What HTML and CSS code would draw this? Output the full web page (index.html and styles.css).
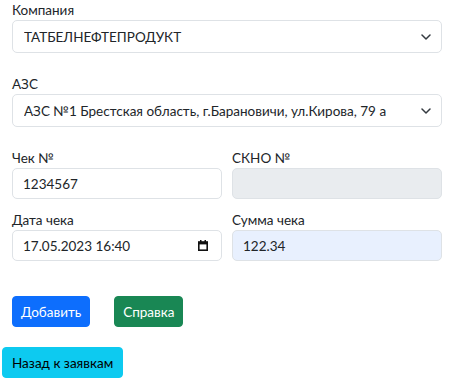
FILE: index.html
```html
<!DOCTYPE html>
<html lang="ru">
<head>
<meta charset="utf-8">
<link rel="stylesheet" href="styles.css">
</head>
<body>
<div class="container">
  <div class="field">
    <label class="label">Компания</label>
    <div class="select">
      <span class="select-text">ТАТБЕЛНЕФТЕПРОДУКТ</span>
      <svg class="chev" width="10" height="6" viewBox="0 0 10 6"><path d="M1 1l4 4 4-4" fill="none" stroke="#343a40" stroke-width="1.5" stroke-linecap="round" stroke-linejoin="round"/></svg>
    </div>
  </div>
  <div class="field gap-lg">
    <label class="label">АЗС</label>
    <div class="select">
      <span class="select-text">АЗС №1 Брестская область, г.Барановичи, ул.Кирова, 79 а</span>
      <svg class="chev" width="10" height="6" viewBox="0 0 10 6"><path d="M1 1l4 4 4-4" fill="none" stroke="#343a40" stroke-width="1.5" stroke-linecap="round" stroke-linejoin="round"/></svg>
    </div>
  </div>
  <div class="grid gap-lg">
    <div class="field">
      <label class="label">Чек №</label>
      <div class="input">1234567</div>
    </div>
    <div class="field">
      <label class="label">СКНО №</label>
      <div class="input disabled"></div>
    </div>
  </div>
  <div class="grid gap-sm">
    <div class="field">
      <label class="label">Дата чека</label>
      <div class="input date">
        <span>17.05.2023 16:40</span>
        <svg class="cal" width="10" height="11" viewBox="0 0 10 11"><rect x="0.8" y="2" width="8.4" height="8.2" fill="none" stroke="#111" stroke-width="1.6"/><rect x="0.8" y="2" width="8.4" height="2.4" fill="#111"/><rect x="2" y="0" width="1.5" height="2.4" fill="#111"/><rect x="6.5" y="0" width="1.5" height="2.4" fill="#111"/></svg>
      </div>
    </div>
    <div class="field">
      <label class="label">Сумма чека</label>
      <div class="input autofill">122.34</div>
    </div>
  </div>
  <div class="actions">
    <button class="btn btn-primary">Добавить</button>
    <button class="btn btn-success">Справка</button>
  </div>
</div>
<div class="back">
  <button class="btn btn-info">Назад к заявкам</button>
</div>
</body>
</html>
```
FILE: styles.css
```css
* { box-sizing: border-box; }
html, body { margin: 0; padding: 0; background: #fff; }
body {
  font-family: Lato, "Noto Sans", sans-serif;
  font-size: 13.5px;
  color: #212529;
}
.container { padding: 0 10px 0 12px; }
.field { display: flex; flex-direction: column; }
.label { display: block; height: 20px; line-height: 21px; }
.gap-lg { margin-top: 21px; }
.gap-sm { margin-top: 11px; }
.select {
  height: 33px;
  border: 1px solid #dee2e6;
  border-radius: 5px;
  display: flex;
  align-items: center;
  padding: 0 10px 0 11px;
}
.select-text { flex: 1; white-space: nowrap; overflow: hidden; }
.chev { flex: none; }
.grid { display: grid; grid-template-columns: 1fr 1fr; column-gap: 10px; }
.input {
  height: 31px;
  border: 1px solid #dee2e6;
  border-radius: 5px;
  padding: 0 10px;
  display: flex;
  align-items: center;
}
.input.disabled { background: #e9ecef; }
.input.autofill { background: #e8f0fe; }
.input.date { justify-content: space-between; padding-right: 13px; }
.cal { flex: none; }
.actions { display: flex; gap: 24px; margin-top: 35px; }
.btn {
  font-family: inherit;
  font-size: 13.5px;
  height: 31px;
  padding: 0 8px;
  border: 1px solid transparent;
  border-radius: 4px;
  color: #fff;
  cursor: pointer;
}
.btn-primary { background: #0d6efd; border-color: #0d6efd; }
.btn-success { background: #198754; border-color: #198754; }
.btn-info { background: #0dcaf0; border-color: #0dcaf0; color: #000; padding: 0 9px; }
.back { padding-left: 2px; margin-top: 20px; }
```
